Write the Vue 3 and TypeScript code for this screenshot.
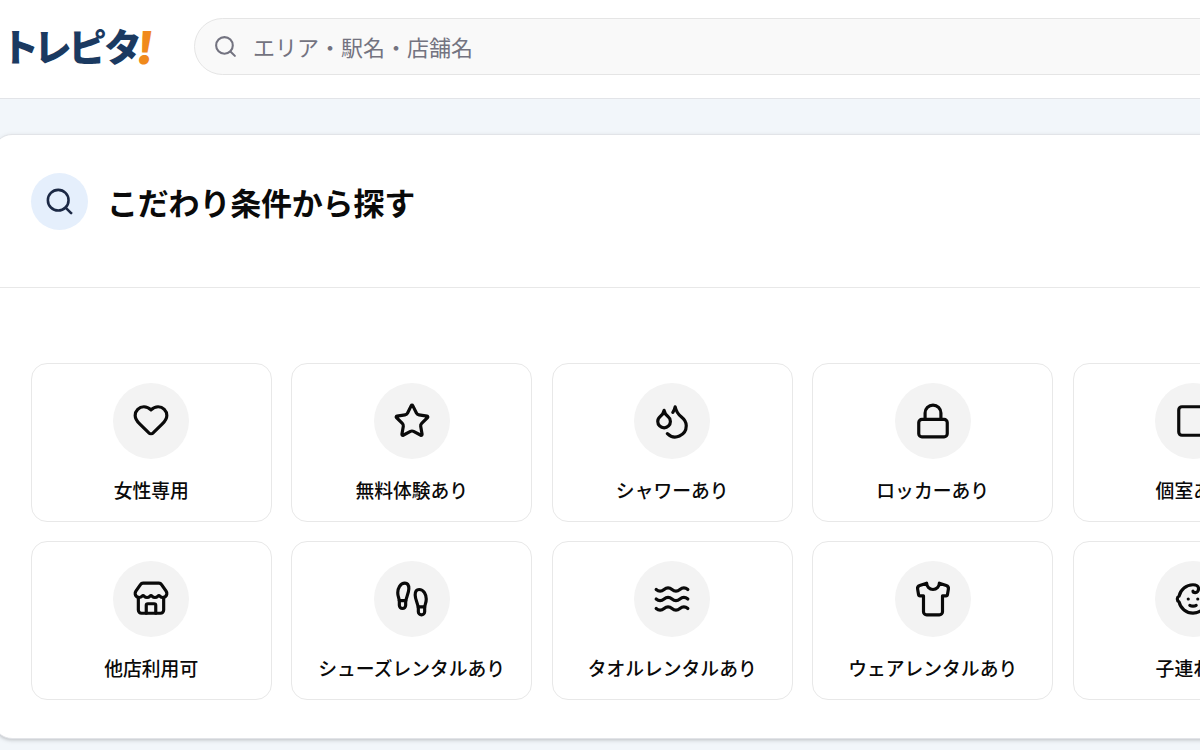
<script setup lang="ts">
interface Feature {
  label: string
  icon: string[]
}

const logoChars = ['ト', 'レ', 'ピ', 'タ']

const features: Feature[] = [
  {
    label: '女性専用',
    icon: [
      'M19 14c1.49-1.46 3-3.21 3-5.5A5.5 5.5 0 0 0 16.5 3c-1.76 0-3 .5-4.5 2-1.5-1.5-2.74-2-4.5-2A5.5 5.5 0 0 0 2 8.5c0 2.3 1.5 4.05 3 5.5l5.5 5.4a2 2 0 0 0 3 0z',
    ],
  },
  {
    label: '無料体験あり',
    icon: [
      'M11.525 2.295a.53.53 0 0 1 .95 0l2.31 4.679a2.123 2.123 0 0 0 1.595 1.16l5.166.756a.53.53 0 0 1 .294.904l-3.736 3.638a2.123 2.123 0 0 0-.611 1.878l.882 5.14a.53.53 0 0 1-.771.56l-4.618-2.428a2.122 2.122 0 0 0-1.973 0L6.396 21.01a.53.53 0 0 1-.77-.56l.881-5.139a2.122 2.122 0 0 0-.611-1.879L2.16 9.795a.53.53 0 0 1 .294-.906l5.165-.755a2.122 2.122 0 0 0 1.597-1.16z',
    ],
  },
  {
    label: 'シャワーあり',
    icon: [
      'M7 16.3c2.2 0 4-1.83 4-4.05 0-1.16-.57-2.26-1.71-3.19S7.29 6.75 7 5.3c-.29 1.45-1.14 2.84-2.29 3.76S3 11.1 3 12.25c0 2.22 1.8 4.05 4 4.05z',
      'M12.56 6.6A10.97 10.97 0 0 0 14 3.02c.5 2.5 2 4.9 4 6.5s3 3.5 3 5.5a6.98 6.98 0 0 1-11.91 4.97',
    ],
  },
  {
    label: 'ロッカーあり',
    icon: [
      'M5 11h14a2 2 0 0 1 2 2v7a2 2 0 0 1-2 2H5a2 2 0 0 1-2-2v-7a2 2 0 0 1 2-2z',
      'M7 11V7a5 5 0 0 1 10 0v4',
    ],
  },
  {
    label: '個室あり',
    icon: ['M5 3h14a2 2 0 0 1 2 2v14a2 2 0 0 1-2 2H5a2 2 0 0 1-2-2V5a2 2 0 0 1 2-2z'],
  },
  {
    label: '他店利用可',
    icon: [
      'M15 21v-5a1 1 0 0 0-1-1h-4a1 1 0 0 0-1 1v5',
      'M17.774 10.31a1.12 1.12 0 0 0-1.549 0 2.5 2.5 0 0 1-3.451 0 1.12 1.12 0 0 0-1.548 0 2.5 2.5 0 0 1-3.452 0 1.12 1.12 0 0 0-1.549 0 2.5 2.5 0 0 1-3.77-3.248l2.889-4.184A2 2 0 0 1 7 2h10a2 2 0 0 1 1.653.873l2.895 4.192a2.5 2.5 0 0 1-3.774 3.244',
      'M4 10.95V19a2 2 0 0 0 2 2h12a2 2 0 0 0 2-2v-8.05',
    ],
  },
  {
    label: 'シューズレンタルあり',
    icon: [
      'M4 16v-2.38C4 11.5 2.97 10.5 3 8c.03-2.72 1.49-6 4.5-6C9.37 2 10 3.8 10 5.5c0 3.11-2 5.66-2 8.68V16a2 2 0 1 1-4 0Z',
      'M20 20v-2.38c0-2.12 1.03-3.12 1-5.62-.03-2.72-1.49-6-4.5-6C14.63 6 14 7.8 14 9.5c0 3.11 2 5.66 2 8.68V20a2 2 0 1 0 4 0Z',
      'M16 17h4',
      'M4 13h4',
    ],
  },
  {
    label: 'タオルレンタルあり',
    icon: [
      'M2 6c.6.5 1.2 1 2.5 1C7 7 7 5 9.5 5c2.6 0 2.4 2 5 2 2.5 0 2.5-2 5-2 1.3 0 1.9.5 2.5 1',
      'M2 12c.6.5 1.2 1 2.5 1 2.5 0 2.5-2 5-2 2.6 0 2.4 2 5 2 2.5 0 2.5-2 5-2 1.3 0 1.9.5 2.5 1',
      'M2 18c.6.5 1.2 1 2.5 1 2.5 0 2.5-2 5-2 2.6 0 2.4 2 5 2 2.5 0 2.5-2 5-2 1.3 0 1.9.5 2.5 1',
    ],
  },
  {
    label: 'ウェアレンタルあり',
    icon: [
      'M20.38 3.46 16 2a4 4 0 0 1-8 0L3.62 3.46a2 2 0 0 0-1.34 2.23l.58 3.47a1 1 0 0 0 .99.84H6v10c0 1.1.9 2 2 2h8a2 2 0 0 0 2-2V10h2.15a1 1 0 0 0 .99-.84l.58-3.47a2 2 0 0 0-1.34-2.23z',
    ],
  },
  {
    label: '子連れ可',
    icon: [
      'M9 12h.01',
      'M15 12h.01',
      'M10 16c.5.3 1.2.5 2 .5s1.5-.2 2-.5',
      'M19 6.3a9 9 0 0 1 1.8 3.9 2 2 0 0 1 0 3.6 9 9 0 0 1-17.6 0 2 2 0 0 1 0-3.6A9 9 0 0 1 12 3c2 0 3.5 1.1 3.5 2.5s-.9 2.5-2 2.5c-.8 0-1.5-.4-1.5-1',
    ],
  },
]
</script>

<template>
  <div class="page">
    <header class="topbar">
      <div class="logo">
        <span v-for="char in logoChars" :key="char" class="logo-char">{{ char }}</span>
        <span class="logo-mark">!</span>
      </div>
      <label class="search">
        <svg class="icon" viewBox="0 0 24 24"><circle cx="11" cy="11" r="8" /><path d="m21 21-4.3-4.3" /></svg>
        <span class="placeholder">エリア・駅名・店舗名</span>
      </label>
    </header>

    <section class="panel">
      <div class="panel-head">
        <div class="badge">
          <svg class="icon" viewBox="0 0 24 24"><circle cx="11" cy="11" r="8" /><path d="m21 21-4.3-4.3" /></svg>
        </div>
        <h2>こだわり条件から探す</h2>
      </div>
      <div class="grid">
        <div v-for="feature in features" :key="feature.label" class="card">
          <div class="disc">
            <svg class="icon" viewBox="0 0 24 24">
              <path v-for="d in feature.icon" :key="d" :d="d" />
            </svg>
          </div>
          <span class="label">{{ feature.label }}</span>
        </div>
      </div>
    </section>
  </div>
</template>

<style>
body {
  margin: 0;
  overflow: hidden;
}
</style>

<style scoped>
.page {
  box-sizing: border-box;
  width: 1200px;
  height: 750px;
  overflow: hidden;
  background: #f2f6fa;
  color: #0a0a0a;
  font-family: "Noto Sans CJK JP", "Noto Sans", sans-serif;
}

.icon {
  display: block;
  flex: none;
  fill: none;
  stroke: currentColor;
  stroke-width: 2;
  stroke-linecap: round;
  stroke-linejoin: round;
}

.topbar {
  box-sizing: border-box;
  display: flex;
  align-items: flex-start;
  width: 1400px;
  height: 99px;
  padding: 18px 0 0 1px;
  background: #fff;
  border-bottom: 1px solid #e2e4e8;
}

.logo {
  display: flex;
  flex: none;
  align-items: baseline;
  width: 193px;
  height: 56px;
  line-height: 49.5px;
  font-size: 38px;
  font-weight: 900;
  color: #1b3a61;
}

.logo-char {
  width: 32.7px;
}

.logo-char:nth-child(2) {
  width: 34.7px;
}

.logo-char:nth-child(3) {
  width: 35.5px;
}

.logo-mark {
  margin-left: 0.5px;
  font-size: 43px;
  color: #f08a1c;
  transform: translateY(2.5px) skewX(-6deg) scaleX(1.1);
}

.search {
  box-sizing: border-box;
  display: flex;
  align-items: center;
  gap: 15px;
  width: 1100px;
  height: 57px;
  padding-left: 18px;
  border: 1px solid #e5e5e5;
  border-radius: 29px;
  background: #f9f9f9;
  color: #737380;
  font-size: 22px;
}

.search .icon {
  width: 25px;
  height: 25px;
}

.placeholder {
  padding-bottom: 2px;
}

.panel {
  box-sizing: border-box;
  width: 1360px;
  height: 605px;
  margin: 35px 0 0 -7px;
  background: #fff;
  border: 1px solid #e2e4e8;
  border-radius: 19px;
  box-shadow: 0 1.6px 4px rgba(0, 0, 0, 0.1), 0 1.6px 3px -1.6px rgba(0, 0, 0, 0.1);
}

.panel-head {
  box-sizing: border-box;
  display: flex;
  align-items: flex-start;
  gap: 19px;
  height: 153px;
  padding: 38px 37px 0;
  border-bottom: 1px solid #e8e8e8;
}

.badge {
  display: flex;
  flex: none;
  align-items: center;
  justify-content: center;
  width: 57px;
  height: 57px;
  border-radius: 50%;
  background: #e5effc;
  color: #1c2945;
}

.badge .icon {
  width: 31px;
  height: 31px;
}

h2 {
  margin: 0;
  font-size: 31px;
  line-height: 58px;
  font-weight: 700;
  letter-spacing: -0.2px;
}

.grid {
  display: grid;
  grid-template-columns: repeat(5, 241.3px);
  grid-auto-rows: 158.7px;
  gap: 19.2px;
  padding: 75px 36.6px 0;
}

.card {
  box-sizing: border-box;
  display: flex;
  flex-direction: column;
  align-items: center;
  padding-top: 19px;
  border: 1px solid #e8e8e8;
  border-radius: 16px;
}

.disc {
  display: flex;
  flex: none;
  align-items: center;
  justify-content: center;
  width: 76px;
  height: 76px;
  border-radius: 50%;
  background: #f3f3f3;
}

.disc .icon {
  width: 38px;
  height: 38px;
}

.label {
  margin-top: 18.4px;
  font-size: 18.8px;
  line-height: 26px;
  font-weight: 500;
  white-space: nowrap;
}
</style>
